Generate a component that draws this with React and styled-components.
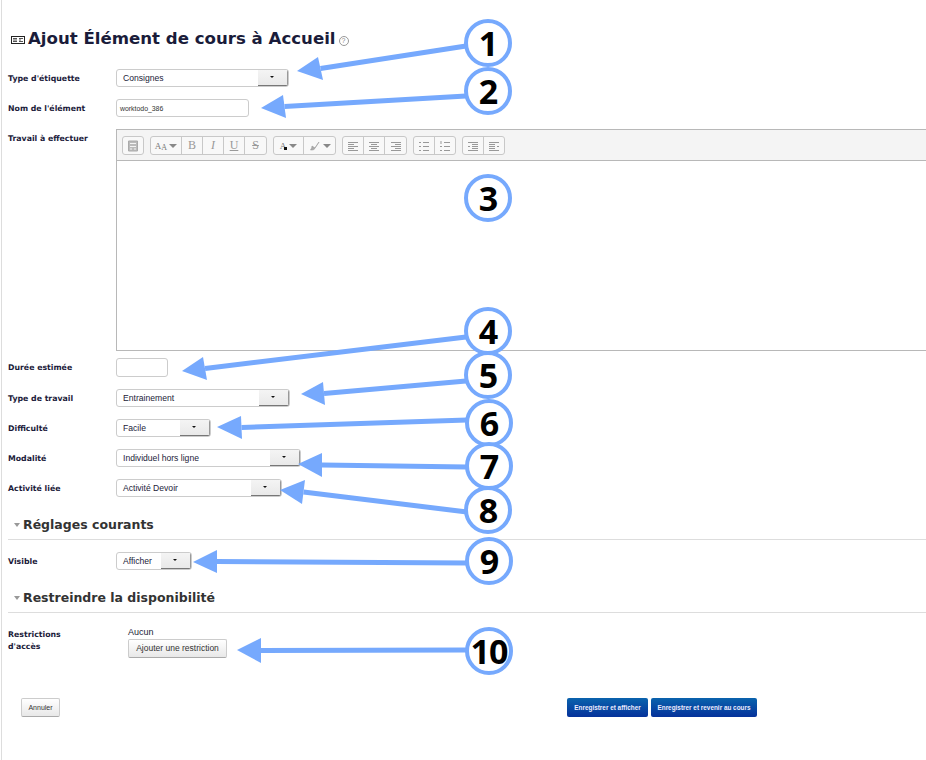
import styled, { createGlobalStyle } from "styled-components";

const GlobalStyle = createGlobalStyle`
  html, body {
    margin: 0;
    padding: 0;
    background: #fff;
    overflow: hidden;
  }
`;

const SANS = `"Liberation Sans", Arial, sans-serif`;
const WIDE = `"DejaVu Sans", Verdana, sans-serif`;
const BLUE = "#76a9fd";

const arrows = [
  { tip: [297, 71], a: [318, 57], b: [323, 80], end: [466, 46] },
  { tip: [261, 108], a: [283, 95], b: [286, 118], end: [466, 96] },
  { tip: [182, 371], a: [203, 357], b: [207, 380], end: [466, 337] },
  { tip: [301, 394], a: [323, 382], b: [325, 405], end: [466, 381] },
  { tip: [217, 427], a: [241, 416], b: [242, 439], end: [467, 420] },
  { tip: [298, 464], a: [322, 453], b: [322, 477], end: [467, 467] },
  { tip: [280, 490], a: [305, 480], b: [302, 504], end: [467, 512] },
  { tip: [193, 562], a: [217, 550], b: [217, 573], end: [467, 563] },
  { tip: [237, 650], a: [261, 638], b: [261, 663], end: [467, 650] },
];

const markers = [
  [1, 488, 43],
  [2, 488, 91],
  [3, 488, 198],
  [4, 488, 331],
  [5, 488, 375],
  [6, 489, 423],
  [7, 489, 466],
  [8, 488, 510],
  [9, 489, 561],
  [10, 489, 651],
];

function App() {
  return (
    <Page>
      <GlobalStyle />
      <DottedBand />
      <Title>
        <TitleIcon viewBox="0 0 14 8">
          <rect x="0.5" y="0.5" width="13" height="7" fill="#fff" stroke="#222" />
          <path d="M2 2.5h4M2 4h4M2 5.5h4M8 2.5h4M8 4h2M8 5.5h4" stroke="#555" />
        </TitleIcon>
        <h2>Ajout Élément de cours à Accueil</h2>
        <HelpIcon>?</HelpIcon>
      </Title>

      <Fields>
        <Row>
          <Label>Type d'étiquette</Label>
          <Select $w={173} $arrow={30}>Consignes</Select>
        </Row>
        <Row>
          <Label>Nom de l'élément</Label>
          <TextInput $w={133}>worktodo_386</TextInput>
        </Row>
        <Row>
          <Label>Travail à effectuer</Label>
          <Editor>
            <Toolbar>
              <Group>
                <ToolButton $w={20}>
                  <Glyph viewBox="0 0 12 12">
                    <path d="M1.5 1h9v10h-9z" fill="#bbb" stroke="#aaa" />
                    <path d="M3 3.5h6M3 6.5h6M3 9h2M7 9h2" stroke="#f4f4f4" />
                  </Glyph>
                </ToolButton>
              </Group>
              <Group>
                <ToolButton $w={31}>
                  <FontIcon>A</FontIcon>
                  <FontIcon $small>A</FontIcon>
                  <Caret />
                </ToolButton>
                <ToolButton $w={21}><Letter>B</Letter></ToolButton>
                <ToolButton $w={21}><Letter $i>I</Letter></ToolButton>
                <ToolButton $w={21}><Letter $u>U</Letter></ToolButton>
                <ToolButton $w={21}><Letter $s>S</Letter></ToolButton>
              </Group>
              <Group>
                <ToolButton $w={30}>
                  <FontIcon>A</FontIcon>
                  <Corner />
                  <Caret />
                </ToolButton>
                <ToolButton $w={31}>
                  <Glyph viewBox="0 0 12 12">
                    <path d="M10 2 6 8 3 6c0 2-1 3-1.500 4 2 0 4 0 4.500-2z" fill="#aaa" stroke="#999" strokeWidth="0.6" />
                  </Glyph>
                  <Caret />
                </ToolButton>
              </Group>
              <Group>
                <ToolButton $w={21}><Lines d="M1 2.500h10M1 4.500h6M1 6.500h10M1 8.500h6M1 10.500h10" /></ToolButton>
                <ToolButton $w={21}><Lines d="M1 2.500h10M3 4.500h6M1 6.500h10M3 8.500h6M1 10.500h10" /></ToolButton>
                <ToolButton $w={21}><Lines d="M1 2.500h10M5 4.500h6M1 6.500h10M5 8.500h6M1 10.500h10" /></ToolButton>
              </Group>
              <Group>
                <ToolButton $w={21}><Lines d="M1 2.500h2M5 2.500h6M1 6.500h2M5 6.500h6M1 10.500h2M5 10.500h6" /></ToolButton>
                <ToolButton $w={20}><Lines d="M2 1v3M5 2.500h6M1 6.500h2M5 6.500h6M1 10.500h2M5 10.500h6" /></ToolButton>
              </Group>
              <Group>
                <ToolButton $w={21}><Lines d="M1 2.500h10M5 4.500h6M1 6.500h2M5 6.500h6M5 8.500h6M1 10.500h10" /></ToolButton>
                <ToolButton $w={20}><Lines d="M1 2.500h10M1 4.500h6M9 6.500h2M1 6.500h6M1 8.500h6M1 10.500h10" /></ToolButton>
              </Group>
            </Toolbar>
          </Editor>
        </Row>
        <Row $top={7}>
          <Label>Durée estimée</Label>
          <TextInput $w={52} $h={19} />
        </Row>
        <Row $top={12}>
          <Label>Type de travail</Label>
          <Select $w={174} $arrow={30}>Entrainement</Select>
        </Row>
        <Row>
          <Label>Difficulté</Label>
          <Select $w={95} $arrow={30}>Facile</Select>
        </Row>
        <Row>
          <Label>Modalité</Label>
          <Select $w={185} $arrow={30}>Individuel hors ligne</Select>
        </Row>
        <Row>
          <Label>Activité liée</Label>
          <Select $w={166} $arrow={30}>Activité Devoir</Select>
        </Row>
      </Fields>

      <Section>
        <Legend>Réglages courants</Legend>
      </Section>
      <Fields $top={12}>
        <Row>
          <Label>Visible</Label>
          <Select $w={76} $arrow={30}>Afficher</Select>
        </Row>
      </Fields>

      <Section>
        <Legend>Restreindre la disponibilité</Legend>
      </Section>
      <Fields $top={14}>
        <Row>
          <Label $multi>
            Restrictions
            <br />
            d'accès
          </Label>
          <Restrictions>
            <span>Aucun</span>
            <Button>Ajouter une restriction</Button>
          </Restrictions>
        </Row>
      </Fields>

      <Actions>
        <SmallButton>Annuler</SmallButton>
        <SaveGroup>
          <PrimaryButton $w={81}>Enregistrer et afficher</PrimaryButton>
          <PrimaryButton $w={106}>Enregistrer et revenir au cours</PrimaryButton>
        </SaveGroup>
      </Actions>

      <Overlay viewBox="0 0 926 760">
        {arrows.map(({ tip, a, b, end }, i) => {
          const baseX = (a[0] + b[0]) / 2;
          const baseY = (a[1] + b[1]) / 2;
          return (
            <g key={i} fill={BLUE} stroke={BLUE}>
              <line x1={baseX} y1={baseY} x2={end[0]} y2={end[1]} strokeWidth="5" />
              <polygon points={`${tip} ${a} ${b}`} strokeWidth="0" />
            </g>
          );
        })}
      </Overlay>
      {markers.map(([n, x, y]) => (
        <Marker key={n} style={{ left: x - 24, top: y - 24 }}>
          {n}
        </Marker>
      ))}
    </Page>
  );
}

const Select = ({ $w, $arrow, children }) => (
  <SelectBox $w={$w}>
    <SelectText>{children}</SelectText>
    <SelectArrow $w={$arrow} />
  </SelectBox>
);

const Lines = ({ d }) => (
  <Glyph viewBox="0 0 12 12">
    <path d={d} stroke="#999" strokeWidth="1" fill="none" />
  </Glyph>
);

const Page = styled.div`
  position: relative;
  width: 926px;
  height: 760px;
  overflow: hidden;
  box-sizing: border-box;
  border-left: 1px solid #ddd;
  margin-left: 1px;
  font-family: ${SANS};
  color: #1b1b33;
`;

const DottedBand = styled.div`
  height: 4px;
  margin: 8px 0 0 6px;
  background-image: radial-gradient(#cfcfcf 0.6px, transparent 0.7px);
  background-size: 2px 2px;
`;

const Title = styled.div`
  display: flex;
  align-items: center;
  height: 24px;
  margin: 15px 0 0 9px;

  h2 {
    margin: 0 0 0 3px;
    font: bold 16.6px/24px ${WIDE};
    color: #1a1c3a;
    white-space: nowrap;
  }
`;

const TitleIcon = styled.svg`
  width: 14px;
  height: 8px;
  margin-top: 2px;
`;

const HelpIcon = styled.span`
  width: 8px;
  height: 8px;
  margin: 3px 0 0 3px;
  border: 1px solid #999;
  border-radius: 50%;
  font: 7px/8px ${SANS};
  color: #888;
  text-align: center;
`;

const Fields = styled.div`
  display: flex;
  flex-direction: column;
  gap: 12px;
  margin: ${(p) => p.$top ?? 18}px 0 0 6px;
`;

const Row = styled.div`
  display: flex;
  align-items: flex-start;
  margin-top: ${(p) => (p.$top ? p.$top - 12 : 0)}px;
`;

const Label = styled.div`
  width: 108px;
  height: ${(p) => (p.$multi ? "auto" : "18px")};
  flex: none;
  font: bold 7.8px/${(p) => (p.$multi ? "12px" : "19px")} ${WIDE};
  padding-top: ${(p) => (p.$multi ? "2px" : "0")};
  color: #1b1b3a;
`;

const SelectBox = styled.div`
  display: flex;
  box-sizing: border-box;
  width: ${(p) => p.$w}px;
  height: 18px;
  background: #fff;
  border: 1px solid #ccc;
  border-radius: 3px;
  overflow: hidden;
`;

const SelectText = styled.div`
  flex: 1;
  padding-left: 6px;
  font-size: 8.6px;
  line-height: 16px;
  color: #222238;
  white-space: nowrap;
`;

const SelectArrow = styled.div`
  position: relative;
  width: ${(p) => p.$w}px;
  background: linear-gradient(#f4f4f4, #e9e9e9);
  border-bottom: 1px solid #777;
  border-right: 1px solid #999;
  box-sizing: border-box;

  &::after {
    content: "";
    position: absolute;
    left: 12px;
    top: 6px;
    border-left: 2px solid transparent;
    border-right: 2px solid transparent;
    border-top: 2px solid #111;
  }
`;

const TextInput = styled.div`
  box-sizing: border-box;
  width: ${(p) => p.$w}px;
  height: ${(p) => p.$h ?? 18}px;
  padding-left: 3px;
  border: 1px solid #ccc;
  border-radius: 3px;
  font-size: 6.9px;
  line-height: 17px;
  color: #333;
`;

const Editor = styled.div`
  box-sizing: border-box;
  flex: none;
  width: 830px;
  height: 222px;
  border: 1px solid #b8b8b8;
  background: #fff;
`;

const Toolbar = styled.div`
  display: flex;
  gap: 6px;
  box-sizing: border-box;
  height: 31px;
  padding: 6px 0 0 5px;
  background: #f4f4f4;
  border-bottom: 1px solid #b8b8b8;
`;

const Group = styled.div`
  display: flex;
  height: 19px;
  box-sizing: border-box;
  border: 1px solid #c8c8c8;
  border-radius: 3px;
  background: #f8f8f8;
`;

const ToolButton = styled.div`
  display: flex;
  align-items: center;
  justify-content: center;
  box-sizing: border-box;
  width: ${(p) => p.$w}px;
  border-right: 1px solid #c8c8c8;

  &:last-child {
    border-right: none;
  }
`;

const Glyph = styled.svg`
  width: 12px;
  height: 12px;
`;

const Letter = styled.span`
  font-family: "Liberation Serif", serif;
  font-size: 12px;
  color: #999;
  font-style: ${(p) => (p.$i ? "italic" : "normal")};
  text-decoration: ${(p) => (p.$u ? "underline" : p.$s ? "line-through" : "none")};
`;

const FontIcon = styled.span`
  font-family: "Liberation Serif", serif;
  font-size: ${(p) => (p.$small ? 8 : 9)}px;
  margin-top: ${(p) => (p.$small ? 3 : 0)}px;
  color: #777;
`;

const Corner = styled.span`
  width: 3px;
  height: 3px;
  margin: 6px 0 0 -2px;
  background: #111;
`;

const Caret = styled.span`
  margin-left: 2px;
  border-left: 4px solid transparent;
  border-right: 4px solid transparent;
  border-top: 4px solid #888;
`;

const Section = styled.div`
  margin: 19px 0 0 6px;
  padding-bottom: 5px;
  border-bottom: 1px solid #ddd;
`;

const Legend = styled.div`
  display: flex;
  align-items: center;
  height: 18px;
  font: bold 12.5px/18px ${WIDE};
  color: #333;
  padding-left: 6px;

  &::before {
    content: "";
    margin-right: 3px;
    border-left: 3.5px solid transparent;
    border-right: 3.5px solid transparent;
    border-top: 4px solid #999;
  }
`;

const Restrictions = styled.div`
  display: flex;
  flex-direction: column;
  align-items: flex-start;
  gap: 2px;
  padding-left: 12px;
  font-size: 9px;
  line-height: 10px;
  color: #222238;
`;

const Button = styled.div`
  box-sizing: border-box;
  width: 99px;
  height: 19px;
  text-align: center;
  font-size: 8.5px;
  line-height: 17px;
  color: #333;
  background: linear-gradient(#fff, #e8e8e8);
  border: 1px solid #ccc;
  border-bottom-color: #aaa;
  border-radius: 2px;
`;

const Actions = styled.div`
  display: flex;
  justify-content: space-between;
  margin: 40px 170px 0 19px;
`;

const SmallButton = styled(Button)`
  width: 39px;
  font-size: 7px;
`;

const SaveGroup = styled.div`
  display: flex;
  gap: 3px;
`;

const PrimaryButton = styled.div`
  box-sizing: border-box;
  width: ${(p) => p.$w}px;
  height: 19px;
  text-align: center;
  font-size: 6.4px;
  font-weight: bold;
  line-height: 19px;
  color: #eef;
  background: linear-gradient(#0a63ad, #05319a);
  border-radius: 2px;
  white-space: nowrap;
`;

const Overlay = styled.svg`
  position: absolute;
  left: -2px;
  top: 0;
  width: 926px;
  height: 760px;
  pointer-events: none;
`;

const Marker = styled.div`
  position: absolute;
  box-sizing: border-box;
  width: 48px;
  height: 48px;
  margin-left: -2px;
  border: 4px solid ${BLUE};
  border-radius: 50%;
  background: #fff;
  font: bold 34px/40px "Open Sans", sans-serif;
  color: #000;
  text-align: center;
  letter-spacing: -1px;
`;

export default App;
